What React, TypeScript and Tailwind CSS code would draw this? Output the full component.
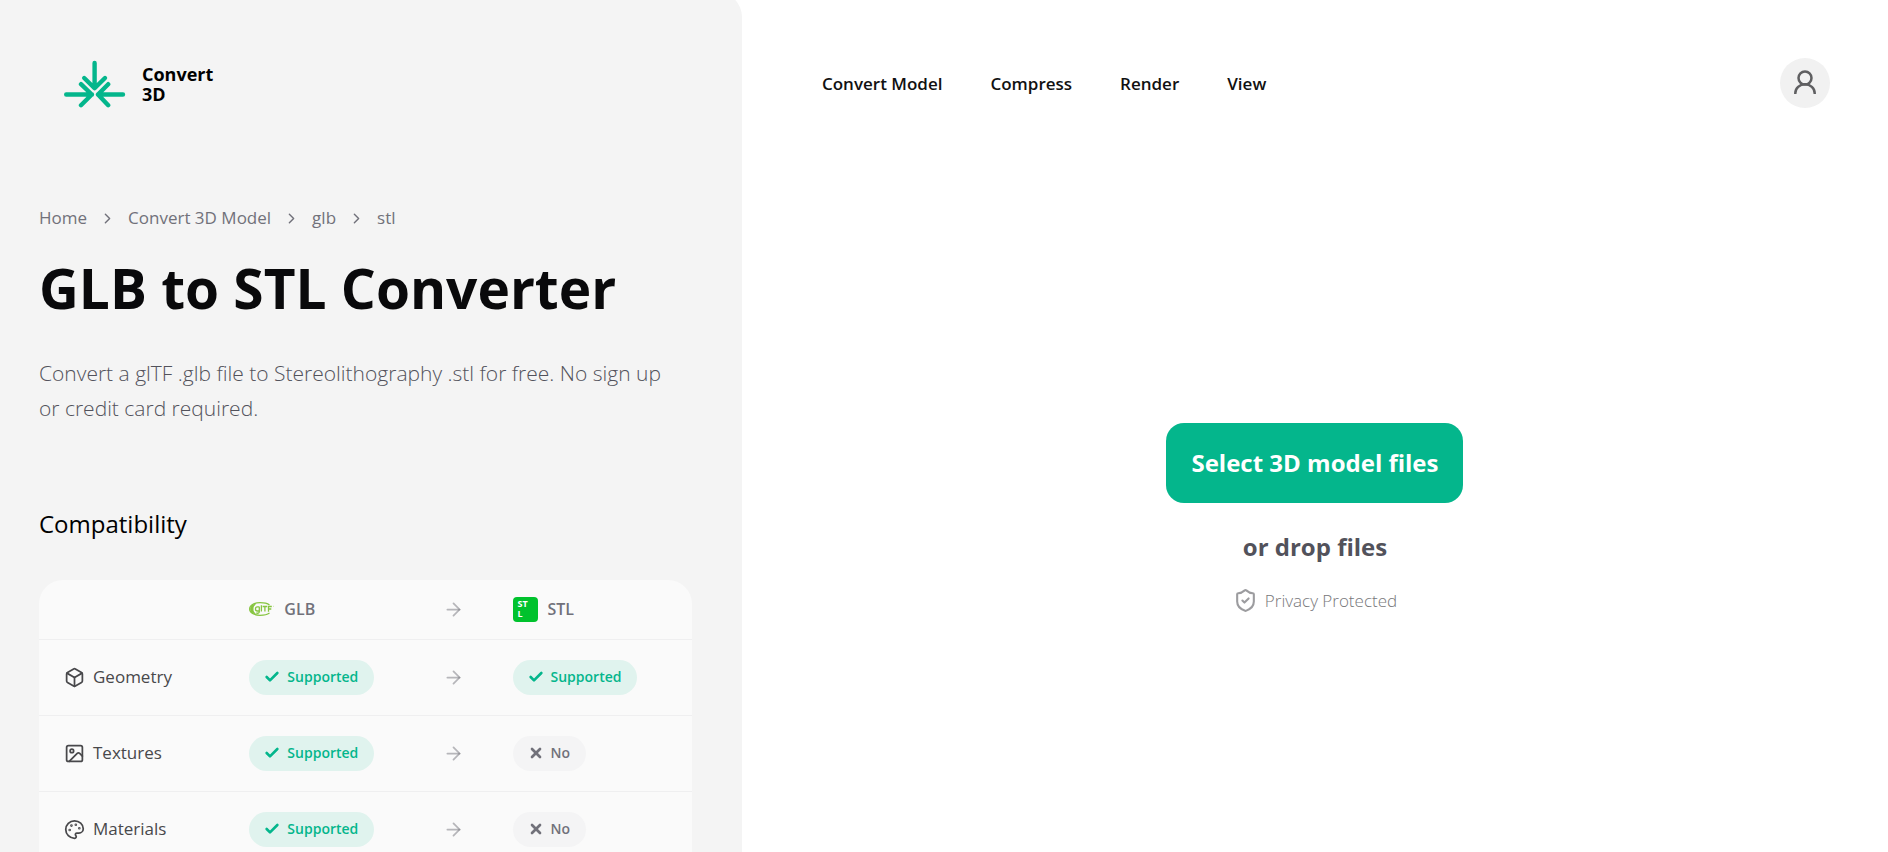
import { Fragment } from 'react'
import {
  ArrowRight,
  Box,
  Check,
  ChevronRight,
  Image,
  Palette,
  ShieldCheck,
  X,
  type LucideIcon,
} from 'lucide-react'

type Feature = {
  name: string
  icon: LucideIcon
  source: boolean
  target: boolean
}

const navLinks = ['Convert Model', 'Compress', 'Render', 'View']

const breadcrumbs = ['Home', 'Convert 3D Model', 'glb', 'stl']

const features: Feature[] = [
  { name: 'Geometry', icon: Box, source: true, target: true },
  { name: 'Textures', icon: Image, source: true, target: false },
  { name: 'Materials', icon: Palette, source: true, target: false },
]

function LogoMark() {
  return (
    <svg
      width="62"
      height="48"
      viewBox="0 0 62 48"
      fill="none"
      stroke="#04b68c"
      strokeWidth="4.4"
      strokeLinecap="round"
      strokeLinejoin="round"
      aria-hidden="true"
    >
      <path d="M30.600 3v25M20.200 18l10.400 10.200L41 18" />
      <path d="M2.200 34.500H28M17 24.200l10.800 10.300L17 45.200" />
      <path d="M59 34.500H34M44.200 24.200 34 34.500l10.200 10.700" />
    </svg>
  )
}

function GltfIcon() {
  return (
    <svg width="25" height="25" viewBox="0 0 25 25" fill="none" aria-hidden="true">
      <path
        d="M20.500 8C18.500 6.500 15 5.700 11 5.700 5 5.700.6 8.300.6 12S5 18.300 11 18.300c4 0 7.500-.8 9.500-2.300"
        stroke="#87c540"
        strokeWidth="1.200"
      />
      <path d="M6.500 7C0 8.500 0 15.700 6.500 17.100c-3.400-2.400-3.400-7.700 0-10.100Z" fill="#87c540" stroke="#87c540" />
      <path
        d="M10.300 9.800H8.400c-2.600 0-2.600 4.200 0 4.200h1.900V9.800v4.900c0 1.500-1.500 1.800-3.200 1.300M12.400 8.300v6.200M13.600 9.500h4.600M15.900 9.500v5M19.500 14.700V9.500h3.300M19.500 12h2.800"
        stroke="#87c540"
        strokeWidth="1.300"
      />
      <path d="M24 9.300h.6" stroke="#87c540" strokeWidth=".6" />
    </svg>
  )
}

function StlIcon() {
  return (
    <span
      className="flex h-[25px] w-[25px] flex-col justify-center rounded bg-[#00c22d] pl-[5px] text-[9px] leading-[10px] font-bold text-white"
      aria-hidden="true"
    >
      <span>ST</span>
      <span>L</span>
    </span>
  )
}

function UserIcon() {
  return (
    <svg width="26" height="26" viewBox="0 0 26 26" fill="none" strokeWidth="2.500" stroke="#5f5f61" aria-hidden="true">
      <circle cx="13" cy="8" r="6.500" />
      <path d="M3.300 24v-.8a9.700 9 0 0 1 19.400 0v.8" />
    </svg>
  )
}

function SupportBadge({ supported }: { supported: boolean }) {
  if (supported) {
    return (
      <span className="inline-flex h-[35px] items-center gap-[7px] rounded-full bg-[#e0f3ee] pr-4 pl-[15px] text-sm font-semibold text-[#04b68c]">
        <Check size={16} strokeWidth={4} />
        Supported
      </span>
    )
  }
  return (
    <span className="inline-flex h-[35px] items-center gap-[7px] rounded-full bg-[#f4f4f5] pr-4 pl-[15px] text-sm font-semibold text-[#71717a]">
      <X size={16} strokeWidth={4} />
      No
    </span>
  )
}

function CompatibilityTable() {
  return (
    <div className="overflow-hidden rounded-t-[24px] bg-[#fafafa]">
      <table className="w-full table-fixed text-left text-[17px]">
        <colgroup>
          <col className="w-[29%]" />
          <col className="w-[29%]" />
          <col className="w-[11%]" />
          <col />
        </colgroup>
        <thead>
          <tr className="h-[59px] border-b border-[#efeff0] text-base text-[#71717a]">
            <td />
            <th scope="col" className="pl-[21px] font-semibold">
              <span className="flex items-center gap-[10px]">
                <GltfIcon />
                GLB
              </span>
            </th>
            <td>
              <ArrowRight size={21} className="ml-[25px] text-[#71717a]/50" />
            </td>
            <th scope="col" className="pl-[23px] font-semibold">
              <span className="flex items-center gap-[10px]">
                <StlIcon />
                STL
              </span>
            </th>
          </tr>
        </thead>
        <tbody>
          {features.map(({ name, icon: Icon, source, target }) => (
            <tr key={name} className="h-[76px] border-b border-[#efeff0]">
              <th scope="row" className="pl-[25px] font-normal text-[#48484b]">
                <span className="flex items-center gap-2">
                  <Icon size={21} />
                  {name}
                </span>
              </th>
              <td className="pl-[21px]">
                <SupportBadge supported={source} />
              </td>
              <td>
                <ArrowRight size={21} className="ml-[25px] text-[#71717a]/50" />
              </td>
              <td className="pl-[23px]">
                <SupportBadge supported={target} />
              </td>
            </tr>
          ))}
        </tbody>
      </table>
    </div>
  )
}

function Sidebar() {
  return (
    <aside className="-mt-2 w-[39.3%] shrink-0 rounded-tr-[25px] bg-[#f4f4f4] pt-2 pr-[50px] pl-[39px]">
      <a href="#" className="mt-[60px] ml-[25px] flex h-[48px] items-center gap-4">
        <LogoMark />
        <span className="flex flex-col text-lg leading-5 font-bold text-black">
          <span>Convert</span>
          <span>3D</span>
        </span>
      </a>

      <nav aria-label="Breadcrumb" className="mt-[98px] flex h-[24px] items-center gap-3 text-[17px] text-[#71717a]">
        {breadcrumbs.map((crumb, index) => (
          <Fragment key={crumb}>
            {index > 0 && <ChevronRight size={17} />}
            <a href="#">{crumb}</a>
          </Fragment>
        ))}
      </nav>

      <h1 className="mt-[28px] text-[55px] leading-[60px] font-bold whitespace-nowrap text-[#09090b]">GLB to STL Converter</h1>

      <p className="mt-[38px] max-w-[640px] text-[21px] leading-[35px] font-light text-[#52525b]">
        Convert a glTF .glb file to Stereolithography .stl for free. No sign up or credit card required.
      </p>

      <h2 className="mt-[78px] mb-[36px] text-2xl leading-[40px] text-black">Compatibility</h2>
      <CompatibilityTable />
    </aside>
  )
}

export default function App() {
  return (
    <div className="flex h-screen overflow-hidden bg-white font-['Open_Sans',sans-serif]">
      <Sidebar />

      <div className="flex flex-1 flex-col">
        <header className="flex items-center justify-between pt-[58px] pr-[58px] pl-[80px]">
          <nav aria-label="Main" className="flex gap-12 pt-[2px] text-[17px] font-semibold text-[#111111]">
            {navLinks.map((link) => (
              <a key={link} href="#">
                {link}
              </a>
            ))}
          </nav>
          <button
            type="button"
            aria-label="Account"
            className="flex h-[50px] w-[50px] items-center justify-center rounded-full bg-[#f1f1f1]"
          >
            <UserIcon />
          </button>
        </header>

        <main className="flex flex-1 flex-col items-center pt-[315px]">
          <button type="button" className="h-[80px] rounded-[18px] bg-[#04b68c] px-[25px] text-2xl font-bold text-white">
            Select 3D model files
          </button>
          <p className="mt-[28px] text-2xl leading-[32px] font-bold text-[#52525b]">or drop files</p>
          <p className="mt-[25px] flex items-center gap-[7px] text-[17px] leading-6 font-light text-[#77777a]">
            <ShieldCheck size={25} className="text-[#9c9c9f]" />
            Privacy Protected
          </p>
        </main>
      </div>
    </div>
  )
}
